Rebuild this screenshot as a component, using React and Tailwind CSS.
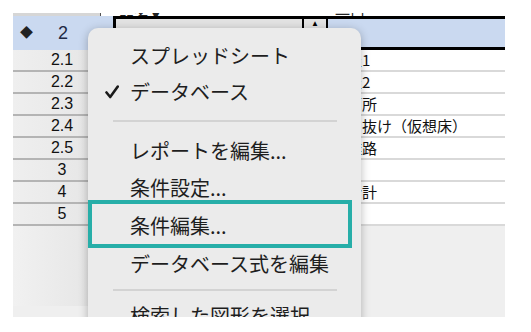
import React from 'react';

const rows = [
  { no: '2.1', name: '部屋1' },
  { no: '2.2', name: '部屋2' },
  { no: '2.3', name: '洗面所' },
  { no: '2.4', name: '吹き抜け（仮想床）' },
  { no: '2.5', name: '避難路' },
  { no: '3', name: '' },
  { no: '4', name: '総合計' },
  { no: '5', name: '' },
];

function Check() {
  return (
    <svg width="14" height="14" viewBox="0 0 14 14" className="block">
      <path d="M1.5 7.5 L5.2 12 L12.8 1.5" fill="none" stroke="#1a1a1a" strokeWidth="2.6" strokeLinecap="round" strokeLinejoin="round" />
    </svg>
  );
}

function MenuItem({ label, checked, h }) {
  return (
    <div className={`flex items-center ${h}`}>
      <span className="w-[42px] pl-[17px]">{checked ? <Check /> : null}</span>
      <span>{label}</span>
    </div>
  );
}

function Separator({ h }) {
  return (
    <div className={`flex items-center ${h} pl-[25px] pr-[24px]`}>
      <div className="h-[2px] w-full bg-[#d3d3d3]" />
    </div>
  );
}

export default function App() {
  return (
    <div className="w-[531px] h-[332px] bg-white pt-[13px] pl-[13px]" style={{ fontFamily: '"Liberation Sans", "Noto Sans CJK JP", sans-serif' }}>
      <div className="relative w-[492px] h-[304px] overflow-hidden bg-[#efefef]">
        {/* header strip, clipped */}
        <div className="flex h-[3px] bg-white">
          <div className="w-[88px] h-full bg-[#d6d6d6] border-r border-[#555]" />
          <div className="w-[12px]" />
          <div className="w-[215px] h-full overflow-hidden flex items-end pl-[6px] text-[15px] leading-none text-[#222]" style={{ fontFamily: '"Noto Sans CJK JP", sans-serif' }}>
            <span className="translate-y-[5px]">品名 ▾</span>
          </div>
          <div className="flex-1 h-full overflow-hidden flex items-end pl-[7px] text-[15px] leading-none text-[#222]" style={{ fontFamily: '"Noto Sans CJK JP", sans-serif' }}>
            <span className="translate-y-[5px]">一口</span>
          </div>
        </div>

        {/* selected row */}
        <div className="flex h-[34px]">
          <div className="w-[100px] flex items-center bg-[#cad9f0] pl-[7px]">
            <span className="text-[13px] text-[#222]">◆</span>
            <span className="flex-1 text-center pr-[20px] text-[18px] text-[#1f2a44]">2</span>
          </div>
          <div className="w-[215px] border-y-[3px] border-l-[3px] border-black bg-[#e3e3e3] flex">
            <div className="flex-1 border-r-2 border-black" />
            <div className="w-[24px] border-r-2 border-black flex justify-center pt-[1px] text-[8px] leading-none text-black">▲</div>
          </div>
          <div className="flex-1 border-y-[3px] border-black bg-[#cad9f0]" />
        </div>

        {/* data rows */}
        {rows.map((r) => (
          <div key={r.no} className="flex h-[22px]">
            <div className="w-[100px] flex items-center justify-center bg-gradient-to-r from-[#efefef] to-[#e4e4e4] border-b-2 border-[#b4b4b4] pr-[2px] text-[16px] text-[#111]">
              {r.no}
            </div>
            <div className="w-[215px] bg-white border-b border-[#d9d9d9]" />
            <div className="flex-1 bg-white border-b-2 border-[#d9d9d9] flex items-center pl-[4px] text-[15px] text-[#111] whitespace-nowrap overflow-hidden" style={{ fontFamily: '"Noto Sans CJK JP", sans-serif' }}>
              {r.name}
            </div>
          </div>
        ))}

        <div className="flex h-[80px]">
          <div className="w-[100px] bg-gradient-to-r from-[#f1f1f1] to-[#e3e3e3]" />
          <div className="flex-1" />
        </div>

        {/* popup menu */}
        <div
          className="absolute left-[75px] top-[15px] w-[273px] h-[330px] rounded-t-[10px] bg-[#ebebeb] shadow-[0_2px_10px_rgba(0,0,0,0.28)] pt-[9px] text-[20px] text-[#1e1e1e]"
          style={{ fontFamily: '"Noto Sans CJK JP", sans-serif' }}
        >
          <MenuItem h="h-[37px]" label="スプレッドシート" />
          <MenuItem h="h-[36px]" label="データベース" checked />
          <Separator h="h-[22px]" />
          <MenuItem h="h-[37px]" label="レポートを編集..." />
          <MenuItem h="h-[37px]" label="条件設定..." />
          <MenuItem h="h-[39px]" label="条件編集..." />
          <MenuItem h="h-[37px]" label="データベース式を編集" />
          <Separator h="h-[15px]" />
          <MenuItem h="h-[37px]" label="検索した図形を選択" />
        </div>

        {/* annotation box */}
        <div className="absolute left-[75px] top-[187px] w-[264px] h-[48px] border-4 border-[#27aea8]" />
      </div>
    </div>
  );
}
